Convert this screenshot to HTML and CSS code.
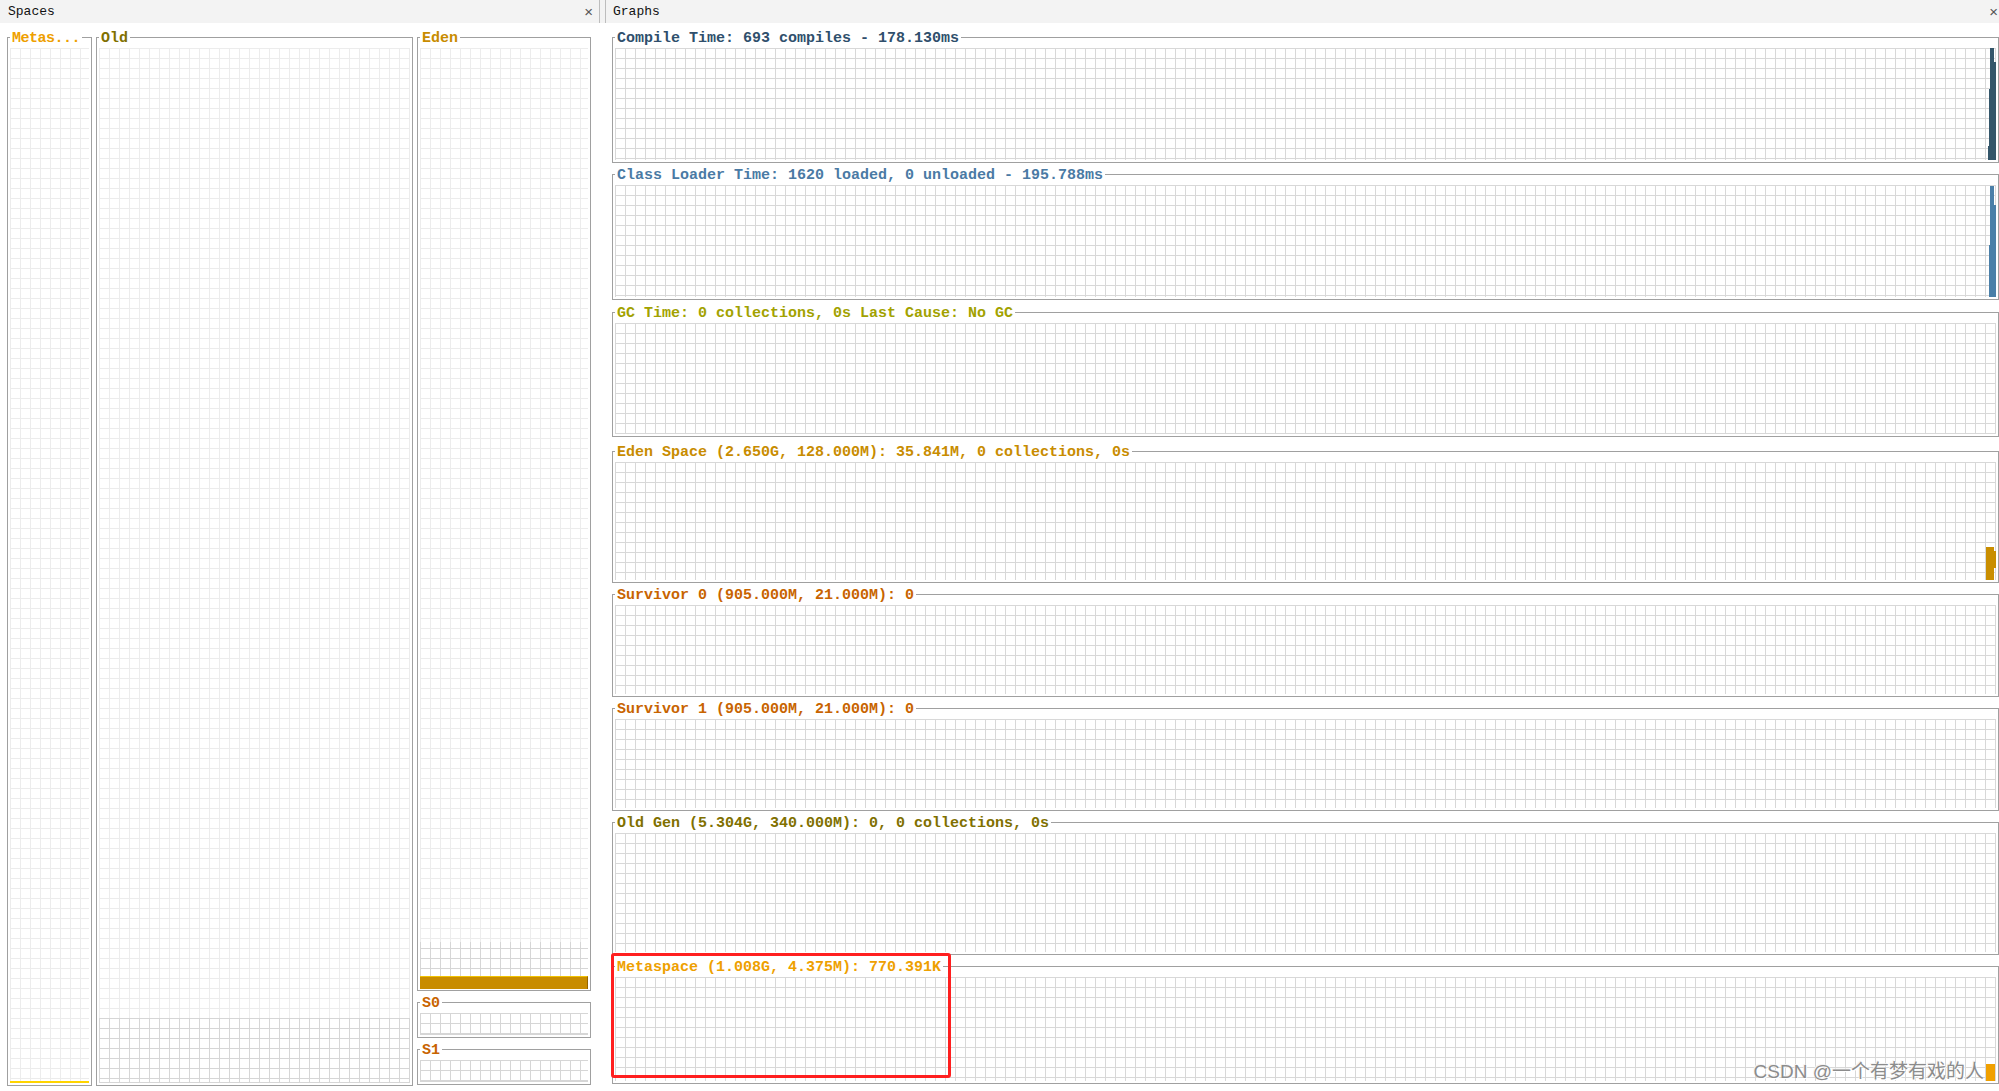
FILE: index.html
```html
<!DOCTYPE html>
<html lang="en">
<head>
<meta charset="utf-8">
<title>Visual GC</title>
<link rel="stylesheet" href="styles.css">
</head>
<body>
<div class="app">
  <section class="spaces">
    <header class="tab"><span class="tab-title">Spaces</span><span class="tab-close">×</span></header>
    <div class="spaces-body">
      <fieldset class="box box-meta">
        <legend class="c-meta">Metas...</legend>
        <div class="sgrid">
          <div class="light fill"></div>
          <div class="meta-used"></div>
        </div>
      </fieldset>
      <fieldset class="box box-old">
        <legend class="c-old">Old</legend>
        <div class="sgrid">
          <div class="light fill"></div>
          <div class="dark old-committed"></div>
        </div>
      </fieldset>
      <div class="eden-col">
        <fieldset class="box box-eden">
          <legend class="c-eden">Eden</legend>
          <div class="sgrid eden-grid">
            <div class="light fill"></div>
            <div class="dark eden-committed"></div>
            <div class="eden-used"></div>
          </div>
        </fieldset>
        <fieldset class="box box-surv">
          <legend class="c-surv">S0</legend>
          <div class="sgrid surv-grid"><div class="dark fill closed"></div></div>
        </fieldset>
        <fieldset class="box box-surv">
          <legend class="c-surv">S1</legend>
          <div class="sgrid surv-grid"><div class="dark fill closed"></div></div>
        </fieldset>
      </div>
    </div>
  </section>
  <div class="splitter"></div>
  <section class="graphs">
    <header class="tab"><span class="tab-title">Graphs</span><span class="tab-close tab-close-edge">×</span></header>
    <div class="graphs-body">
      <fieldset class="chart">
        <legend class="c-compile">Compile Time: 693 compiles - 178.130ms</legend>
        <div class="cgrid g-compile">
          <svg class="series" width="12" height="112" viewBox="0 0 12 112">
            <rect x="4" y="98" width="2" height="14" fill="#34566a"/>
            <rect x="5" y="41" width="1" height="71" fill="#34566a"/>
            <rect x="6" y="0" width="4" height="112" fill="#34566a"/>
            <rect x="10" y="14" width="2" height="98" fill="#34566a"/>
          </svg>
        </div>
      </fieldset>
      <fieldset class="chart gap3">
        <legend class="c-class">Class Loader Time: 1620 loaded, 0 unloaded - 195.788ms</legend>
        <div class="cgrid g-class">
          <svg class="series" width="12" height="112" viewBox="0 0 12 112">
            <rect x="5" y="60" width="1" height="52" fill="#4a7fa8"/>
            <rect x="6" y="1" width="4" height="111" fill="#4a7fa8"/>
            <rect x="10" y="20" width="2" height="92" fill="#4a7fa8"/>
          </svg>
        </div>
      </fieldset>
      <fieldset class="chart gap4">
        <legend class="c-gc">GC Time: 0 collections, 0s Last Cause: No GC</legend>
        <div class="cgrid g-gc"></div>
      </fieldset>
      <fieldset class="chart gap6">
        <legend class="c-eden">Eden Space (2.650G, 128.000M): 35.841M, 0 collections, 0s</legend>
        <div class="cgrid g-eden">
          <svg class="series" width="12" height="118" viewBox="0 0 12 118">
            <rect x="2" y="85" width="8" height="33" fill="#c98e00"/>
            <rect x="10" y="89" width="2" height="17" fill="#c98e00"/>
          </svg>
        </div>
      </fieldset>
      <fieldset class="chart gap3">
        <legend class="c-surv">Survivor 0 (905.000M, 21.000M): 0</legend>
        <div class="cgrid g-surv"></div>
      </fieldset>
      <fieldset class="chart gap3">
        <legend class="c-surv">Survivor 1 (905.000M, 21.000M): 0</legend>
        <div class="cgrid g-surv"></div>
      </fieldset>
      <fieldset class="chart gap3">
        <legend class="c-old">Old Gen (5.304G, 340.000M): 0, 0 collections, 0s</legend>
        <div class="cgrid g-old"></div>
      </fieldset>
      <fieldset class="chart gap3">
        <legend class="c-meta">Metaspace (1.008G, 4.375M): 770.391K</legend>
        <div class="cgrid g-meta">
          <svg class="series" width="12" height="104" viewBox="0 0 12 104">
            <rect x="2" y="87" width="9" height="17" fill="#f0a000"/>
          </svg>
        </div>
      </fieldset>
    </div>
  </section>
</div>
<div class="highlight"></div>
<div class="watermark">CSDN @一个有梦有戏的人</div>
</body>
</html>
```
FILE: styles.css
```css
* { box-sizing: border-box; }
html, body { margin: 0; padding: 0; background: #fff; }
body {
  width: 1999px;
  height: 1091px;
  overflow: hidden;
  position: relative;
  font-family: "Liberation Mono", monospace;
}
.app { display: flex; height: 1091px; }
.spaces { width: 600px; flex: none; }
.splitter { width: 5px; flex: none; background: linear-gradient(#f3f3f3 0 23px, #fff 23px); }
.graphs { flex: 1; min-width: 0; overflow: hidden; }

.tab {
  height: 23px;
  background: #f3f3f3;
  display: flex;
  align-items: center;
  justify-content: space-between;
  font: 13px/23px "Liberation Mono", monospace;
  color: #111;
  overflow: hidden;
}
.spaces .tab { border-right: 1px solid #bdbdbd; padding: 0 6px 0 8px; }
.graphs .tab { border-left: 1px solid #bdbdbd; padding: 0 1px 0 7px; }
.tab-close { font: 15px/23px "Liberation Sans", sans-serif; color: #555; }

/* shared fieldset look */
fieldset { margin: 0; min-width: 0; border: 1px solid #a0a0a0; padding: 3px 2px 2px; }
legend {
  padding: 0 2px;
  margin: 0;
  height: 16px;
  font: bold 15px/20px "Liberation Mono", monospace;
  white-space: nowrap;
}
.c-meta { color: #eea000; }
.c-old { color: #807000; }
.c-eden { color: #c88c00; }
.c-surv { color: #c86400; }
.c-compile { color: #2f4f6c; }
.c-class { color: #4a7aa4; }
.c-gc { color: #a2a200; }

/* Spaces panel */
.spaces-body { display: flex; align-items: flex-start; gap: 4px; padding: 6px 0 0 7px; }
.box-meta { width: 85px; }
.box-meta legend { letter-spacing: -0.5px; }
.box-old { width: 317px; }
.eden-col { width: 174px; display: flex; flex-direction: column; gap: 3px; }
.box-eden { padding-bottom: 1px; }
.sgrid { height: 1035px; display: flex; flex-direction: column; }
.eden-grid { height: 941px; }
.surv-grid { height: 22px; }
.fill { flex: 1; }
.light {
  background-image: linear-gradient(90deg, #ececec 1px, transparent 1px), linear-gradient(#ececec 1px, transparent 1px);
  background-size: 10px 10px;
}
.dark {
  background-image: linear-gradient(90deg, #d6d6d6 1px, transparent 1px), linear-gradient(#d6d6d6 1px, transparent 1px);
  background-size: 10px 10px;
}
.closed { border-bottom: 2px solid #d6d6d6; }
.meta-used { height: 2px; background: #ffd400; }
.old-committed { height: 65px; border-bottom: 1px solid #d6d6d6; }
.eden-committed { height: 34px; background-position: 0 6px; }
.eden-used {
  height: 13px;
  background: #c88c00;
  border-top: 1px solid #f2c200;
  border-right: 1px solid #946400;
}

/* Graphs panel */
.graphs-body { padding: 6px 0 0 7px; }
.chart { display: block; }
.gap3 { margin-top: 3px; }
.gap4 { margin-top: 4px; }
.gap6 { margin-top: 6px; }
.cgrid {
  position: relative;
  background-image: linear-gradient(90deg, #d8d8d8 1px, transparent 1px), linear-gradient(#d8d8d8 1px, transparent 1px);
  background-size: 10px 10px;
}
.g-compile, .g-class { height: 112px; }
.g-gc { height: 111px; }
.g-eden { height: 118px; }
.g-surv { height: 89px; }
.g-old { height: 119px; }
.g-meta { height: 104px; }
.series { position: absolute; right: 0; top: 0; display: block; }

/* overlays */
.highlight {
  position: absolute;
  left: 611px;
  top: 953px;
  width: 340px;
  height: 125px;
  border: 3px solid #ff1f1f;
  border-radius: 3px;
}
.watermark {
  position: absolute;
  right: 15px;
  bottom: 9px;
  font: 19px/20px "Liberation Sans", "Noto Sans CJK SC", sans-serif;
  color: #8c8c8c;
  text-shadow: 1px 1px 0 #ffffff, -1px -1px 0 #f4f4f4;
  white-space: nowrap;
}
```
